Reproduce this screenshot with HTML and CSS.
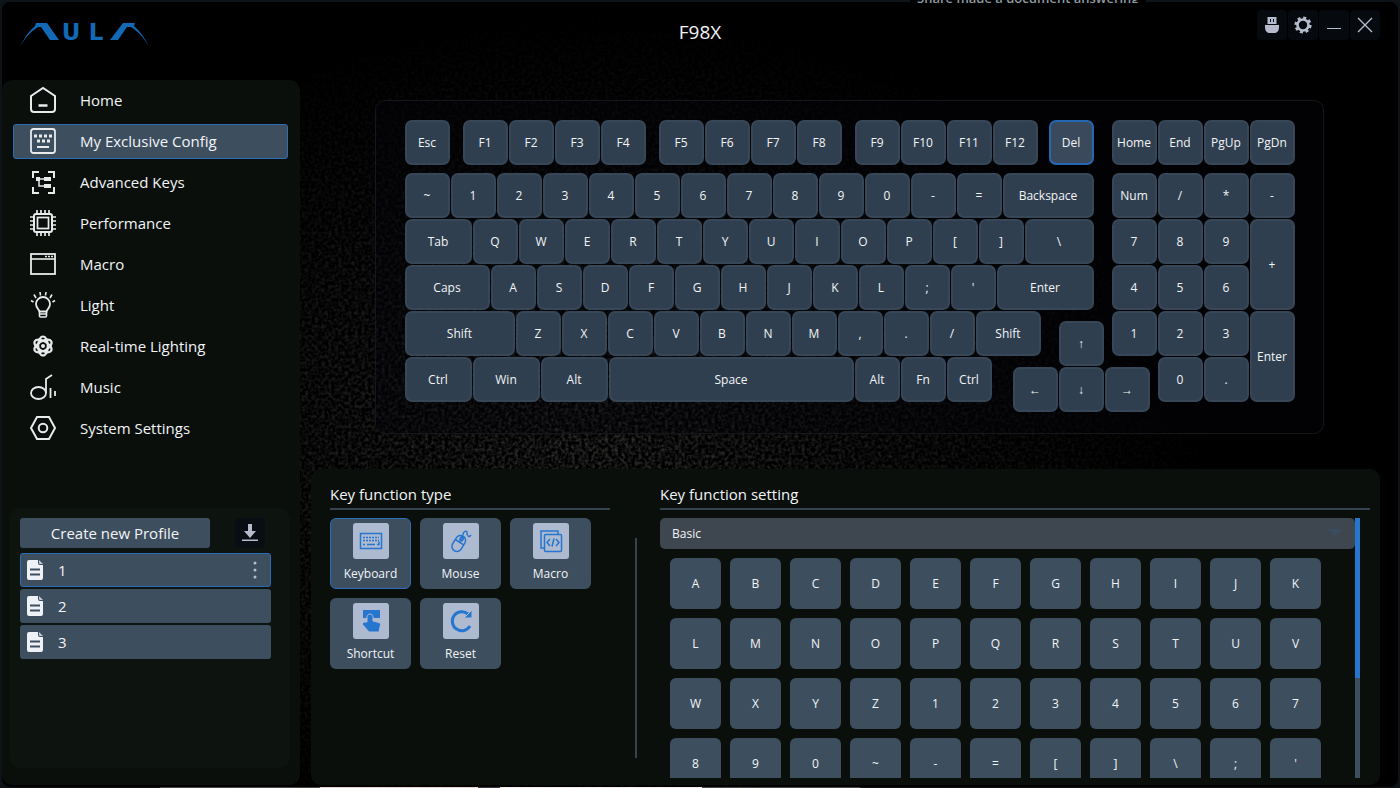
FILE: index.html
```
<!DOCTYPE html>
<html lang="en">
<head>
  <meta charset="UTF-8">
  <title>AULA F98X</title>
  <link rel="stylesheet" href="styles.css">
</head>
<body>
  <div class="behind-top">Share made a document answering</div>

  <div class="window">
    <svg class="texture" aria-hidden="true">
      <filter id="grain">
        <feTurbulence type="fractalNoise" baseFrequency="0.3" numOctaves="2" seed="4"/>
        <feColorMatrix values="0 0 0 0 0.5  0 0 0 0 0.48  0 0 0 0 0.46  1 0 0 0 -0.36"/>
      </filter>
      <rect width="100%" height="100%" filter="url(#grain)"/>
    </svg>

    <header class="titlebar">
      <svg class="logo" width="130" height="36" viewBox="0 -6 130 36" role="img" aria-label="AULA">
        <path d="M0 25C4 16 9 9 15 4l1-3h11l12 17h-9L21 5h-3C10 10 5 16 0 25z"/>
        <path d="M129 25C125 16 120 9 114 4l1-3h-12L90 18h8l9-13h4C119 10 124 16 129 25z"/>
        <text x="51" y="18" text-anchor="middle">U</text>
        <text x="76" y="18" text-anchor="middle">L</text>
      </svg>
      <h1>F98X</h1>
      <div class="window-buttons">
        <button type="button" aria-label="Device">
          <svg width="16" height="18" viewBox="0 0 16 18"><path fill-rule="evenodd" d="M3.500 1h9v7h-9zM6 3v3h1V3zM9 3v3h1V3z"/><path d="M1 9h14v2c0 4-2 6-5 6H6c-3 0-5-2-5-6z"/></svg>
        </button>
        <button type="button" aria-label="Settings">
          <svg width="18" height="18" viewBox="0 0 18 18"><circle cx="9" cy="9" r="5.5" fill="none" stroke="currentColor" stroke-width="2.6"/><circle cx="9" cy="9" r="7.3" fill="none" stroke="currentColor" stroke-width="2.6" stroke-dasharray="3 2.73"/></svg>
        </button>
        <button type="button" aria-label="Minimize">
          <svg width="16" height="16" viewBox="0 0 16 16"><path d="M1 11.5h14" stroke="currentColor"/></svg>
        </button>
        <button type="button" aria-label="Close">
          <svg width="16" height="16" viewBox="0 0 16 16"><path d="M1 1l14 14M15 1L1 15" stroke="currentColor" stroke-width="1.4"/></svg>
        </button>
      </div>
    </header>

    <div class="layout">
      <aside class="sidebar">
        <nav>
          <a href="#home">
            <svg viewBox="0 0 26 26"><path d="M1 9L13 1l12 8v13q0 3-3 3H4q-3 0-3-3z" stroke-width="2"/><path d="M8.500 18.500h9" stroke-width="2.4"/></svg>
            Home
          </a>
          <a href="#config" class="active">
            <svg viewBox="0 0 26 26"><rect x="1" y="1" width="24" height="24" rx="2.500" stroke-width="1.8"/><path d="M4 8h18.500M7 13h14" stroke-width="3" stroke-dasharray="3 2"/><path d="M7 19h12" stroke-width="1.8"/></svg>
            My Exclusive Config
          </a>
          <a href="#advanced">
            <svg viewBox="0 0 26 26"><path d="M3 9V3h6M18 3h6v6M24 18v6h-6M9 24H3v-6" stroke-width="2"/><path d="M7 10h9M9 10v7h6" stroke-width="1.5"/><path class="solid" d="M6 8h4v4H6zM14 8h7v4h-7zM14 15h7v4h-7z"/></svg>
            Advanced Keys
          </a>
          <a href="#performance">
            <svg viewBox="0 0 26 26"><rect x="4" y="4" width="18" height="18" rx="2" stroke-width="2"/><rect x="7.500" y="7.500" width="11" height="11" stroke-width="1.700"/><path d="M7 0v4M11 0v4M15 0v4M19 0v4M7 22v4M11 22v4M15 22v4M19 22v4M0 7h4M0 11h4M0 15h4M0 19h4M22 7h4M22 11h4M22 15h4M22 19h4" stroke-width="1.700"/></svg>
            Performance
          </a>
          <a href="#macro">
            <svg viewBox="0 0 26 26"><rect x="1" y="3" width="24" height="20" stroke-width="1.8"/><path d="M1 8h24" stroke-width="1.6"/><path d="M15 5.500h8" stroke-width="1.5" stroke-dasharray="2 1"/></svg>
            Macro
          </a>
          <a href="#light">
            <svg viewBox="0 0 26 26"><path d="M9.500 19.500c0-2-3.500-3-3.500-7.500a7 7 0 0 1 14 0c0 4.500-3.500 5.500-3.500 7.500z" stroke-width="1.8"/><path d="M9.500 19v5q0 1 1 1h5q1 0 1-1v-5M9 22h8" stroke-width="1.6"/><path d="M10.500 3.500L10 0M15.500 3.500L16 0M6 6L4 2.500M20 6l2-3.500M3.500 10L1 8.500M22.500 10L25 8.500" stroke-width="1.6"/></svg>
            Light
          </a>
          <a href="#realtime">
            <svg viewBox="0 0 26 26"><g stroke-width="2.2"><ellipse cx="13" cy="13" rx="4.800" ry="9.500"/><ellipse cx="13" cy="13" rx="4.800" ry="9.500" transform="rotate(60 13 13)"/><ellipse cx="13" cy="13" rx="4.800" ry="9.500" transform="rotate(120 13 13)"/></g><circle class="solid" cx="13" cy="13" r="2"/></svg>
            Real-time Lighting
          </a>
          <a href="#music">
            <svg viewBox="0 0 26 26"><ellipse cx="8.500" cy="19" rx="7.500" ry="6" stroke-width="1.8"/><path d="M16 19V5l6-4M20.500 14v10M25 17v5" stroke-width="1.8"/></svg>
            Music
          </a>
          <a href="#system">
            <svg viewBox="0 0 26 26"><path d="M7 2h12l6 11-6 11H7L1 13z" stroke-width="2"/><circle cx="13" cy="13" r="4.300" stroke-width="2"/></svg>
            System Settings
          </a>
        </nav>

        <section class="profiles">
          <div class="profile-actions">
            <button type="button" class="create">Create new Profile</button>
            <button type="button" class="import" aria-label="Import profile">
              <svg width="16" height="18" viewBox="0 0 16 18"><path d="M6 0h4v7h4l-6 7-6-7h4zM0 15.500h16V17H0z"/></svg>
            </button>
          </div>
          <ul id="profileList"></ul>
        </section>
      </aside>

      <main>
        <section class="keyboard" aria-label="Keyboard">
          <div class="main-keys" id="mainKeys"></div>
          <div class="num-keys" id="numKeys"></div>
        </section>

        <section class="panel">
          <div class="types">
            <h2>Key function type</h2>
            <div class="type-list">
              <button type="button" class="type active">
                <svg viewBox="0 0 36 36"><rect x="7.500" y="10.500" width="21" height="15"/><path d="M10 14.500h16M10 17.500h16" stroke-dasharray="2 1"/><path d="M10 21.500h2M14 21.500h8M24 21.500h2v-3"/></svg>
                Keyboard
              </button>
              <button type="button" class="type">
                <svg viewBox="0 0 36 36"><g transform="rotate(32 16 20)"><rect x="11" y="12" width="10" height="17" rx="5"/><path d="M11 19h10M16 12v7"/><rect x="14.500" y="13" width="3" height="4" rx="1.500"/></g><path d="M20 12c0-4 4-5 4-2s2 5 4 2"/></svg>
                Mouse
              </button>
              <button type="button" class="type">
                <svg viewBox="0 0 36 36"><path d="M11 25H8V8h17v3"/><rect x="11.500" y="11.500" width="17" height="17" rx="1"/><path d="M17 16l-3 3.500 3 3.500M23 16l3 3.500-3 3.500M21 15.500l-2 8"/></svg>
                Macro
              </button>
              <button type="button" class="type">
                <svg viewBox="0 0 36 36"><path class="solid" d="M9.500 6.500h18v9h-18z"/><path class="solid" d="M14 19v-5c0-4 6-4 6 0v4l6 1.500q1.500.5 1.500 2L26 29H16l-7-8 2-2z"/></svg>
                Shortcut
              </button>
              <button type="button" class="type">
                <svg viewBox="0 0 36 36"><path d="M27 23a9.500 9.500 0 1 1-2-12" stroke-width="3"/><path class="solid" d="M29 7v8h-8z"/></svg>
                Reset
              </button>
            </div>
          </div>

          <div class="divider"></div>

          <div class="settings">
            <h2><label for="keySet">Key function setting</label></h2>
            <div class="scroll-area">
              <div class="scroll-content">
                <div class="select-box">
                  <select id="keySet">
                    <option>Basic</option>
                  </select>
                </div>
                <div class="key-grid" id="keyGrid"></div>
              </div>
              <div class="scrollbar"><div class="thumb"></div></div>
            </div>
          </div>
        </section>
      </main>
    </div>
  </div>

  <div class="behind-bottom"></div>

  <script>
    // key: "label" or ["label", width, class]
    const mainRows = [
      ['Esc', ['F1', 45, 'gap'], 'F2', 'F3', 'F4', ['F5', 45, 'gap'], 'F6', 'F7', 'F8', ['F9', 45, 'gap'], 'F10', 'F11', 'F12', ['Del', 45, 'last selected']],
      ['~', '1', '2', '3', '4', '5', '6', '7', '8', '9', '0', '-', '=', ['Backspace', 91]],
      [['Tab', 67], 'Q', 'W', 'E', 'R', 'T', 'Y', 'U', 'I', 'O', 'P', '[', ']', ['\\', 69]],
      [['Caps', 85], 'A', 'S', 'D', 'F', 'G', 'H', 'J', 'K', 'L', ';', "'", ['Enter', 97]],
      [['Shift', 110], 'Z', 'X', 'C', 'V', 'B', 'N', 'M', ',', '.', '/', ['Shift', 65], ['↑', 45, 'low arrow-up']],
      [['Ctrl', 67], ['Win', 67], ['Alt', 67], ['Space', 245], 'Alt', 'Fn', 'Ctrl', ['←', 45, 'low arrow-left'], ['↓', 45, 'low'], ['→', 45, 'low']]
    ];

    const numKeys = [
      'Home', 'End', 'PgUp', 'PgDn',
      'Num', '/', '*', '-',
      '7', '8', '9', ['+', 'tall'],
      '4', '5', '6',
      '1', '2', '3', ['Enter', 'tall'],
      ['0', 'zero'], '.'
    ];

    const settingKeys = [...'ABCDEFGHIJKLMNOPQRSTUVWXYZ1234567890~-=[]\\;\''];

    const makeKey = (label, cls) => {
      const key = document.createElement('button');
      key.type = 'button';
      key.className = 'key ' + (cls || '');
      key.textContent = label;
      return key;
    };

    mainRows.forEach(row => {
      const div = document.createElement('div');
      div.className = 'row';
      row.forEach(item => {
        const [label, width, cls] = [].concat(item);
        const key = makeKey(label, cls);
        if (width) key.style.width = width + 'px';
        div.appendChild(key);
      });
      document.getElementById('mainKeys').appendChild(div);
    });

    numKeys.forEach(item => {
      const [label, cls] = [].concat(item);
      document.getElementById('numKeys').appendChild(makeKey(label, cls));
    });

    settingKeys.forEach(label => {
      const key = makeKey(label);
      key.className = 'set-key';
      document.getElementById('keyGrid').appendChild(key);
    });

    ['1', '2', '3'].forEach((name, i) => {
      document.getElementById('profileList').innerHTML += `<li>
        <button type="button" class="profile ${i === 0 ? 'active' : ''}">
          <svg width="16" height="20" viewBox="0 0 16 20"><path fill="#eef1f6" d="M2 0h9v3q0 2 2 2h3v13q0 2-2 2H2q-2 0-2-2V2q0-2 2-2z"/><path fill="#c5ccd6" d="M12 0l4 4h-3q-1 0-1-1z"/><path d="M3 9.500h10M3 14.500h10" stroke="#3d4e5f" stroke-width="2"/></svg>
          <span>${name}</span>
          ${i === 0 ? '<svg class="more" width="4" height="18" viewBox="0 0 4 18"><circle cx="2" cy="2" r="1.500"/><circle cx="2" cy="9" r="1.500"/><circle cx="2" cy="16" r="1.500"/></svg>' : ''}
        </button>
      </li>`;
    });
  </script>
</body>
</html>
```
FILE: styles.css
```
* { box-sizing: border-box; margin: 0; padding: 0; }

body {
  font-family: 'Open Sans', 'Noto Sans', sans-serif;
  font-size: 15px;
  color: #f2f4f6;
  background: #0e1317;
  padding: 2px 2px 0;
}

button, select {
  font: inherit;
  color: inherit;
  border: none;
  cursor: pointer;
}

h1, h2 { font-weight: normal; }

/* slivers of the desktop around the window */
.behind-top {
  position: absolute;
  top: 0;
  left: 65%;
  z-index: 1;
  display: flex;
  align-items: flex-end;
  height: 3px;
  padding: 0 7px;
  overflow: hidden;
  background: #000;
  color: #8d9aa2;
  font-size: 13px;
  font-weight: 600;
  line-height: 10px;
  white-space: nowrap;
}

.behind-bottom {
  height: 1px;
  margin: 0 -2px;
  background: linear-gradient(to right, #0e1317 160px, #4a4746 160px 320px, #e6d3d0 320px 478px, #3a3844 478px 500px, #efe9ec 500px 702px, #4a4746 702px 860px, #0e1317 860px);
}

.window {
  position: relative;
  display: flex;
  flex-direction: column;
  height: calc(100vh - 3px);
  background: #000;
  border-radius: 8px;
  overflow: hidden;
}

.texture {
  position: absolute;
  inset: 0;
  width: 100%;
  height: 100%;
  opacity: 0.6;
  -webkit-mask-image: radial-gradient(ellipse 46% 56% at 42% 56%, #000, transparent);
  mask-image: radial-gradient(ellipse 46% 56% at 42% 56%, #000, transparent);
}

/* title bar */
.titlebar {
  position: relative;
  display: grid;
  grid-template-columns: 1fr auto 1fr;
  align-items: start;
  height: 78px;
  padding: 8px 18px 0;
}

.logo {
  margin-top: 6px;
  fill: #1269b5;
}

.logo text {
  font-family: 'DejaVu Sans', sans-serif;
  font-weight: bold;
  font-size: 23px;
}

.titlebar h1 {
  font-size: 19px;
  line-height: 26px;
  margin-top: 9px;
}

.window-buttons {
  display: flex;
  justify-content: flex-end;
  gap: 1px;
}

.window-buttons button {
  display: flex;
  align-items: center;
  justify-content: center;
  width: 30px;
  height: 30px;
  border-radius: 4px;
  background: #06090d;
  color: #b4bccd;
}

.window-buttons svg { fill: currentColor; }

.layout {
  position: relative;
  display: flex;
  flex: 1;
  min-height: 0;
  padding-bottom: 2px;
}

/* sidebar */
.sidebar {
  display: flex;
  flex-direction: column;
  justify-content: space-between;
  width: 298px;
  padding: 3px 10px 17px 8px;
  border-radius: 10px;
  background: #0a0f0c;
}

nav {
  display: flex;
  flex-direction: column;
  gap: 6px;
  padding: 0 2px 0 3px;
}

nav a {
  display: flex;
  align-items: center;
  gap: 24px;
  height: 35px;
  padding: 0 0 2px 16px;
  border: 1px solid transparent;
  border-radius: 3px;
  color: inherit;
  text-decoration: none;
}

nav a.active {
  background: #3d4e5f;
  border-color: #2d6cb8;
}

nav svg {
  width: 26px;
  height: 26px;
  fill: none;
  stroke: #e8eaec;
  overflow: visible;
}

nav .solid {
  fill: #e8eaec;
  stroke: none;
}

.profiles {
  height: 260px;
  padding: 10px 19px 10px 10px;
  border-radius: 10px;
  background: #0d130f;
}

.profile-actions {
  display: flex;
  justify-content: space-between;
  padding-right: 6px;
  margin-bottom: 5px;
}

.create {
  width: 190px;
  height: 30px;
  border-radius: 3px;
  background: #3d4e5f;
}

.import {
  display: flex;
  align-items: center;
  justify-content: center;
  width: 30px;
  height: 30px;
  border-radius: 4px;
  background: #090d14;
}

.import svg { fill: #b4bccd; }

.profiles ul {
  display: flex;
  flex-direction: column;
  gap: 2px;
  list-style: none;
}

.profile {
  display: flex;
  align-items: center;
  gap: 15px;
  width: 100%;
  height: 34px;
  padding: 0 13px 0 6px;
  border: 1px solid transparent;
  border-radius: 3px;
  background: #3d4e5f;
}

.profile.active { border-color: #2d6cb8; }

.more {
  margin-left: auto;
  fill: #b4bccd;
}

/* keyboard */
main {
  display: flex;
  flex: 1;
  flex-direction: column;
  align-items: center;
  min-width: 0;
}

.keyboard {
  display: flex;
  gap: 18px;
  margin-top: 20px;
  padding: 19px 28px 31px 29px;
  border: 1px solid #15171a;
  border-radius: 10px;
  background: rgba(6, 6, 12, 0.4);
}

.main-keys {
  display: flex;
  flex-direction: column;
  gap: 1px;
  width: 689px;
}

.row {
  display: flex;
  gap: 1px;
  height: 45px;
}

.row:first-child { margin-bottom: 7px; }

.key {
  flex-shrink: 0;
  width: 45px;
  height: 45px;
  border: 2px solid #374757;
  border-radius: 7px;
  background: #2f3f4f;
  font-size: 12px;
}

.key.selected {
  background: #3a4a5c;
  border-color: #2468b4;
}

.key.gap { margin-left: 12px; }
.key.last { margin-left: 10px; }
.key.low { margin-top: 10px; }
.key.arrow-up { margin-left: 17px; }
.key.arrow-left { margin-left: 20px; }

.num-keys {
  display: grid;
  grid-template-columns: repeat(4, 45px);
  grid-template-rows: 52px repeat(5, 45px);
  gap: 1px;
}

.key.tall {
  grid-column: 4;
  grid-row: span 2;
  height: 91px;
}

.key.zero { grid-column: 2; }

/* function panel */
.panel {
  display: flex;
  flex: 1;
  align-self: stretch;
  min-height: 0;
  margin: 35px 18px 0 11px;
  padding: 14px 10px 7px 19px;
  border-radius: 10px;
  background: #0a0f0c;
}

.panel h2 {
  font-size: 15px;
  line-height: 22px;
  padding-bottom: 3px;
  border-bottom: 2px solid #344251;
  margin-bottom: 8px;
}

.types { width: 280px; }

.type-list {
  display: flex;
  flex-wrap: wrap;
  gap: 9px;
}

.type {
  display: flex;
  flex-direction: column;
  align-items: center;
  gap: 6px;
  width: 81px;
  height: 71px;
  padding: 0 0 2px;
  border: 1px solid transparent;
  border-radius: 6px;
  background: #3d4e5f;
  font-size: 12px;
  line-height: 18px;
}

.type.active { border-color: #2d6cb8; }

.type svg {
  width: 36px;
  height: 36px;
  margin-top: 4px;
  border-radius: 3px;
  background: #aebad0;
  fill: none;
  stroke: #2676d0;
  stroke-width: 1.5;
}

.type .solid {
  fill: #2676d0;
  stroke: #aebad0;
  stroke-width: 1;
}

.divider {
  width: 2px;
  margin: 55px 23px 20px 25px;
  background: #344251;
}

.settings {
  display: flex;
  flex: 1;
  flex-direction: column;
  min-width: 0;
}

.scroll-area {
  display: flex;
  flex: 1;
  min-height: 0;
  padding-right: 10px;
}

.scroll-content {
  flex: 1;
  overflow-y: auto;
  scrollbar-width: none;
}

.select-box { position: relative; }

.select-box::after {
  content: '';
  position: absolute;
  top: 11px;
  right: 13px;
  border: 7px solid transparent;
  border-top-color: #3a4c60;
  border-bottom: none;
}

select {
  appearance: none;
  display: block;
  width: 100%;
  height: 31px;
  padding: 0 12px;
  border-radius: 5px;
  background: #3e4750;
  font-size: 12px;
}

.key-grid {
  display: grid;
  grid-template-columns: repeat(auto-fill, 51px);
  gap: 9px;
  padding: 9px 0 0 10px;
}

.set-key {
  height: 51px;
  border-radius: 6px;
  background: #3d4e5f;
  font-size: 12px;
}

.scrollbar {
  width: 5px;
  background: #3d4e5f;
}

.thumb {
  height: 160px;
  background: #2676d0;
}
```
